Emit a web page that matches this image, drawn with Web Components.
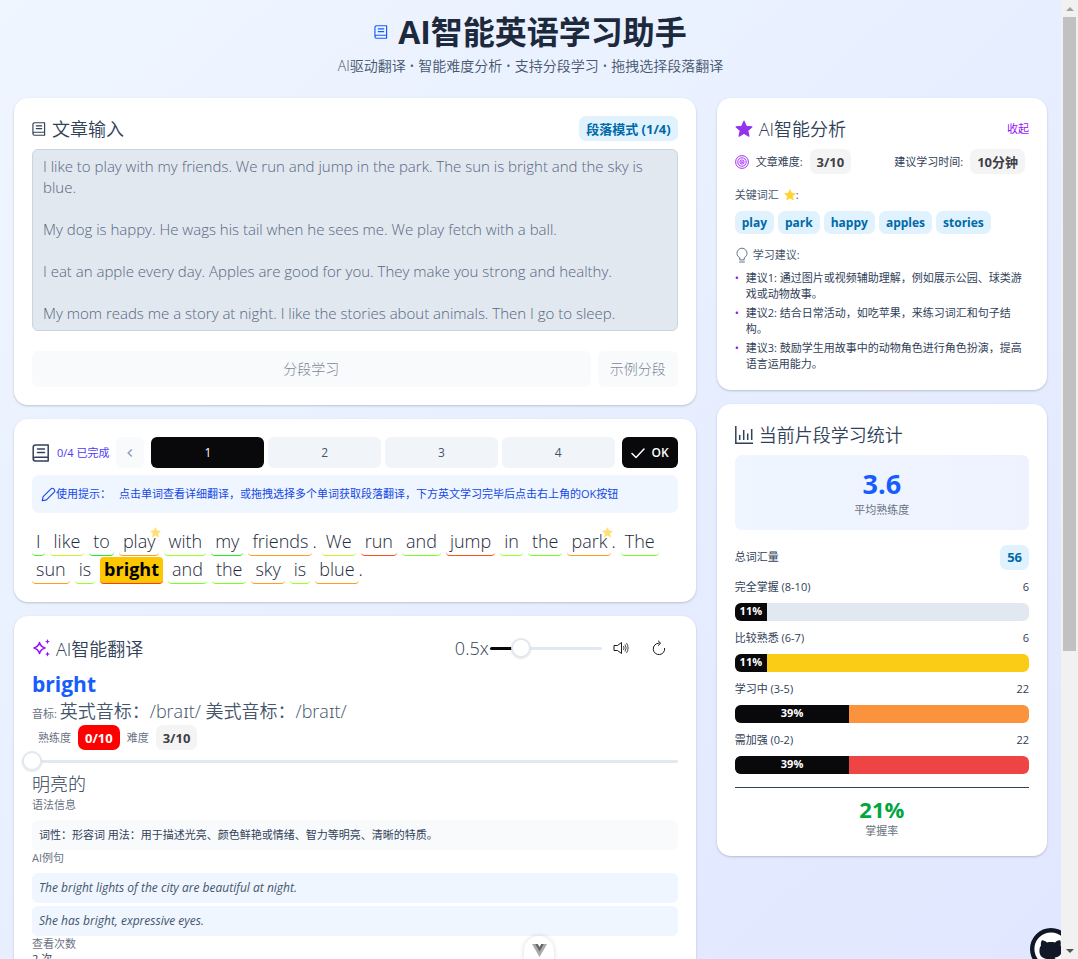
<!DOCTYPE html>
<html lang="zh-CN">
<head>
<meta charset="utf-8">
<meta name="viewport" content="width=device-width, initial-scale=1">
<title>AI智能英语学习助手</title>
<style>
html, body { margin: 0; height: 100%; }
body {
  font-family: "Open Sans", "Noto Sans CJK SC", "Noto Sans", sans-serif;
  font-size: 11px; line-height: 16px; color: #314158;
  overflow: hidden;
}
</style>
</head>
<body>
<study-app></study-app>
<script>
const BASE = `
  *, *::before, *::after { box-sizing: border-box; }
  :host { display: block; box-sizing: border-box; }
  :host([hidden]) { display: none; }
  h1, h2, p, ul { margin: 0; padding: 0; font-weight: inherit; }
  button, textarea { font: inherit; }
  button { border: 0; padding: 0; cursor: pointer; }
`;

function define(name, css, html, setup) {
  const tpl = document.createElement('template');
  customElements.define(name, class extends HTMLElement {
    constructor() {
      super();
      this.attachShadow({ mode: 'open' });
    }
    connectedCallback() {
      if (this.shadowRoot.childNodes.length) return;
      const markup = typeof html === 'function' ? html(this) : html;
      tpl.innerHTML = `<style>${BASE}${css}</style>${markup}`;
      this.shadowRoot.append(tpl.content.cloneNode(true));
      if (setup) setup(this);
    }
  });
}

/* ---------- icons ---------- */
const STAR = 'M12 1.5l3.1 6.9 7.5.8-5.6 5 1.6 7.4L12 17.8l-6.6 3.8L7 14.2l-5.6-5 7.5-.8z';
const ICONS = {
  book: ['0 0 18 18', '<g fill="none" stroke="currentColor" stroke-width="1.5" stroke-linejoin="round" stroke-linecap="round"><path d="M16.2 13.2V1H3.4A2.2 2.2 0 0 0 1.2 3.200V15a2 2 0 0 0 2 2h13M16.200 13.200H3.200a1.900 1.900 0 0 0 0 3.800M16.200 13.200v3.800M5.500 5h7M5.500 8.500h7"/></g>'],
  star: ['0 0 24 24', `<path fill="currentColor" stroke="currentColor" stroke-width="1.500" stroke-linejoin="round" d="${STAR}"/>`],
  target: ['0 0 16 16', '<g fill="none" stroke="currentColor"><circle cx="8" cy="8" r="7.300"/><circle cx="8" cy="8" r="4.800"/><circle cx="8" cy="8" r="2.400"/></g><circle cx="8" cy="8" r="1" fill="currentColor"/>'],
  bulb: ['0 0 14 16', '<path fill="none" stroke="currentColor" stroke-linecap="round" stroke-linejoin="round" d="M4.800 12.500v-1.800C3 9.800 2 8.200 2 6.200a5 5 0 0 1 10 0c0 2-1 3.600-2.800 4.500v1.800zM4.500 15h5"/>'],
  chart: ['0 0 18 18', '<path fill="none" stroke="currentColor" stroke-width="1.500" d="M.8 0v17.200H18"/><path fill="none" stroke="currentColor" stroke-width="1.500" d="M4.700 14V9M8.700 14V4M12.700 14V7.500M16.700 14V3"/>'],
  pen: ['0 0 16 16', '<path fill="none" stroke="currentColor" stroke-width="1.200" stroke-linejoin="round" d="M1.300 14.700l1-4.500 8.300-8.300a2 2 0 0 1 2.900 0l.6.6a2 2 0 0 1 0 2.900l-8.300 8.300z"/>'],
  sparkle: ['0 0 18 18', '<path fill="none" stroke="currentColor" stroke-width="1.500" stroke-linejoin="round" d="M7.500 3.500c.8 3.200 2.200 4.500 5.500 5.500-3.300 1-4.700 2.300-5.500 5.500C6.700 11.300 5.300 10 2 9c3.300-1 4.700-2.300 5.500-5.500z"/><path fill="currentColor" d="M15.500 0l.8 1.900 1.700.6-1.700.7-.8 1.800-.8-1.800-1.700-.7 1.700-.6zM15.500 12.500l.8 1.900 1.700.6-1.700.7-.8 1.800-.8-1.800-1.700-.7 1.700-.6z"/>'],
  speaker: ['0 0 16 16', '<g fill="none" stroke="currentColor"><path d="M1 5.500h3.500L8.500 2.500v11L4.500 10.500H1z"/><path d="M10.500 6q1 2 0 4M12 4.500q2.200 3.500 0 7M13.500 3q3.200 5 0 10" stroke-width=".8"/></g>'],
  refresh: ['0 0 16 16', '<g fill="none" stroke="currentColor"><path d="M8.500 3.200H7.800A5.700 5.700 0 1 0 13.600 8"/><path d="M7 .7l2.600 2.500L7 5.700"/></g>'],
  check: ['0 0 14 14', '<path fill="none" stroke="currentColor" stroke-width="1.500" stroke-linecap="round" stroke-linejoin="round" d="M1 7.500l4 4L13 3"/>'],
  left: ['0 0 14 14', '<path fill="none" stroke="currentColor" stroke-width="1.500" d="M8.800 3.500L5.200 7l3.600 3.500"/>'],
  vue: ['0 0 15 13', '<path fill="#aaa" d="M0 0h3l4.500 8L12 0h3L7.500 13z"/><path fill="#666" d="M3 0h2.800l1.700 3 1.700-3H12L7.500 8z"/>'],
  github: ['0 0 42 42', '<circle cx="21" cy="21" r="18.800" fill="#fff" stroke="#101828" stroke-width="4.400"/><path fill="#101828" d="M11.500 13c.2-.8.500-1 1.200-.8 1.800.5 3.300 1.300 4.300 2.200 2.600-.6 5.400-.6 8 0 1-1 2.500-1.800 4.300-2.200.7-.2 1 0 1.200.8.400 1.800.4 3.200 0 4.300 1.200 1.500 1.700 3.200 1.500 5.200-.4 4.300-3 6.500-7.500 7.200 1 1 1.500 2 1.500 3.500v6h-10v-3.500c-3.500.7-4.500-.6-5.300-2.400-.4-.8-.8-1.200-1.500-1.700 2.200-.4 3 1.600 4 2.200 1 .5 2 .4 2.900 0 .1-1.200.5-2 1.200-2.700-5.500-.7-8.300-3.500-7.800-9.300.1-1.800.5-3 1.500-4.300-.4-1.200-.2-2.700.5-4.500z"/>']
};
define('ui-icon', `
  :host { display: inline-flex; flex: none; width: 18px; height: 18px; }
  svg { width: 100%; height: 100%; display: block; }`,
  el => { const [box, body] = ICONS[el.getAttribute('name')];
    return `<svg viewBox="${box}" aria-hidden="true">${body}</svg>`; });

/* ---------- small building blocks ---------- */
define('ui-card', `
  :host { background: #fff; border-radius: 14px; padding: 18px;
    box-shadow: 0 1px 3px rgba(0,0,0,.1), 0 1px 2px rgba(0,0,0,.1); }`, '<slot></slot>');

define('ui-heading', `
  :host { display: flex; align-items: center; gap: 6px; height: 25px; }
  h2 { padding-top: 1px; font-size: 18px; line-height: 26px; font-weight: 350; color: #314158; }
  .end { margin-left: auto; display: flex; }`,
  '<slot name="icon"></slot><h2><slot></slot></h2><div class="end"><slot name="end"></slot></div>');

define('ui-badge', `
  :host { display: inline-flex; align-items: center; flex: none; height: 25px; padding: 0 7px; border-radius: 7px;
    font-size: 13px; line-height: 16px; font-weight: 700; background: #f4f4f5; color: #3f3f46; }
  :host([tone=info]) { background: #dff2fe; color: #0069a8; }
  :host([tone=danger]) { background: #f00; color: #fff; }
  :host([small]) { height: 23px; font-size: 12px; }`, '<slot></slot>');

define('ui-progress', `
  .row { display: flex; justify-content: space-between; line-height: 16px; }
  .track { margin-top: 8px; height: 18px; border-radius: 6px; overflow: hidden; background: var(--track); }
  .fill { height: 100%; background: #09090b; color: #fff; font-weight: 700; text-align: center; line-height: 16px; width: var(--value); }`,
  el => { const v = el.getAttribute('value');
    return `<div class="row"><span id="l">${el.getAttribute('label')}</span><span>${el.getAttribute('count')}</span></div>
      <div class="track" role="progressbar" aria-labelledby="l" aria-valuenow="${v}" style="--value:${v}%;--track:${el.getAttribute('color')}"><div class="fill">${v}%</div></div>`; });

define('ui-slider', `
  :host { display: flex; }
  input { -webkit-appearance: none; appearance: none; margin: 0; width: 100%; height: 20px; background: transparent; }
  input::-webkit-slider-runnable-track { height: 3px; border-radius: 2px;
    background: linear-gradient(to right, #09090b var(--fill, 0%), #e2e8f0 var(--fill, 0%)); }
  input::-webkit-slider-thumb { -webkit-appearance: none; width: 20px; height: 20px; margin-top: -9px;
    border-radius: 50%; background: #fff; border: 2px solid #e2e8f0; box-shadow: 0 1px 2px rgba(0,0,0,.1); }`,
  el => `<input type="range" aria-label="${el.getAttribute('label')}" min="0" max="${el.getAttribute('max')}" step="0.1" value="${el.getAttribute('value')}">`);

/* ---------- page parts ---------- */
define('page-header', `
  :host { text-align: center; margin-bottom: 22px; }
  h1 { display: flex; align-items: center; justify-content: center; gap: 10px; font-size: 32px; line-height: 36px; font-weight: 700; color: #1d293d; }
  h1 ui-icon { width: 14px; height: 14px; color: #155dfc; }
  p { margin-top: 6px; font-size: 14px; line-height: 20px; color: #45556c; font-weight: 350; }`,
  `<h1><ui-icon name="book"></ui-icon>AI智能英语学习助手</h1>
   <p>AI驱动翻译 • 智能难度分析 • 支持分段学习 • 拖拽选择段落翻译</p>`);

define('article-input', `
  ui-icon { width: 14px; height: 14px; }
  textarea { display: block; width: 100%; height: 182px; margin: 8px 0 20px; padding: 6px 10px; resize: none; overflow: hidden;
    border: 1px solid #cad5e2; border-radius: 6px; background: #e2e8f0; color: #56677f; font-size: 15px; line-height: 21px; font-weight: 350; }
  .row { display: flex; gap: 7px; }
  .row button { height: 36px; border-radius: 6px; background: #f8fafc; color: #7c8698; font-size: 14px; font-weight: 300; padding: 0 12px; }
  .row .grow { flex: 1; }`,
  `<ui-card>
    <ui-heading><ui-icon slot="icon" name="book"></ui-icon>文章输入<ui-badge slot="end" tone="info">段落模式 (1/4)</ui-badge></ui-heading>
    <textarea aria-label="文章输入" disabled>I like to play with my friends. We run and jump in the park. The sun is bright and the sky is blue.

My dog is happy. He wags his tail when he sees me. We play fetch with a ball.

I eat an apple every day. Apples are good for you. They make you strong and healthy.

My mom reads me a story at night. I like the stories about animals. Then I go to sleep.</textarea>
    <div class="row"><button class="grow" disabled>分段学习</button><button disabled>示例分段</button></div>
  </ui-card>`);

const G = '#4cf01c', L = '#c6f61c', O = '#ff9d1c', R = '#ff4d1c', Y = '#9aff1c';
const WORDS = [['I', G], ['like', L], ['to', '#1cf01c'], ['play', O, '', 1], ['with', Y], ['my', '#1cf01c'], ['friends', O, '.'],
  ['We', L], ['run', R], ['and', '#7dff1c'], ['jump', R], ['in', Y], ['the', '#7dff1c'], ['park', O, '.', 1], ['The', '#7dff1c'],
  ['sun', O], ['is', Y], ['bright', '#ff3b1c', '', 0, 1], ['and', '#7dff1c'], ['the', '#7dff1c'], ['sky', O], ['is', Y], ['blue', O, '.']];
define('study-reader', `
  .nav { display: flex; align-items: center; gap: 7px; }
  .nav > span { color: #4f39f6; white-space: nowrap; }
  .nav button { height: 31px; border-radius: 6px; font-size: 12px; }
  .prev { width: 28px; background: #f8fafc; color: #90a1b9; }
  .prev ui-icon { width: 14px; height: 14px; vertical-align: middle; }
  .steps { flex: 1; display: flex; gap: 4px; }
  .steps button { flex: 1; background: #f1f5f9; color: #45556c; }
  .steps button.on, .ok { background: #09090b; color: #fff; }
  .nav .ok { display: flex; align-items: center; gap: 7px; padding: 0 9px; font-weight: 600; }
  .ok ui-icon { width: 14px; height: 14px; }
  .hint { display: flex; align-items: center; height: 38px; margin: 7px 0 16px; padding: 0 9px; border-radius: 7px; background: #eff6ff; color: #1447e6; }
  .hint ui-icon { width: 15px; height: 15px; }
  .hint span { margin-right: 8px; }
  .words { display: flex; flex-wrap: wrap; gap: 1px 5px; font-size: 18px; line-height: 25px; font-weight: 350; color: #1d293d; }
  .words > span { display: flex; }
  .w { position: relative; height: 27px; padding: 0 4px; border-radius: 4px; border-bottom: 1px solid var(--c); }
  .w.on { background: #fdc700; color: #000; font-weight: 700; }
  .w ui-icon { position: absolute; top: -2px; right: -2px; width: 11px; height: 11px; color: #ffdf70; }`,
  `<ui-card>
    <div class="nav"><ui-icon name="book"></ui-icon><span>0/4 已完成</span>
      <button class="prev" aria-label="上一段"><ui-icon name="left"></ui-icon></button>
      <div class="steps"><button class="on">1</button><button>2</button><button>3</button><button>4</button></div>
      <button class="ok"><ui-icon name="check"></ui-icon>OK</button></div>
    <div class="hint"><ui-icon name="pen"></ui-icon><span>使用提示：</span><p>点击单词查看详细翻译，或拖拽选择多个单词获取段落翻译，下方英文学习完毕后点击右上角的OK按钮</p></div>
    <div class="words">${WORDS.map(([w, c, p = '', s, on]) => `<span><span class="w${on ? ' on' : ''}" style="--c:${c}">${w}${s ? '<ui-icon name="star"></ui-icon>' : ''}</span>${p}</span>`).join('')}</div>
  </ui-card>`);

define('word-translation', `
  ui-heading { height: 28px; }
  .purple { color: #9810fa; }
  .ctl { display: flex; align-items: center; font-size: 18px; font-weight: 350; }
  .ctl ui-slider { width: 112px; margin-left: 1px; }
  .ctl button { display: flex; justify-content: center; align-items: center; width: 38px; height: 28px; background: none; color: #18181b; }
  .ctl ui-icon { width: 16px; height: 16px; }
  .word { margin-top: 8px; font-size: 21px; line-height: 28px; font-weight: 700; color: #155dfc; }
  .label { color: #6a7282; line-height: 15px; }
  .ph { height: 27px; line-height: 27px; color: #45556c; }
  .ph b { font-size: 18px; font-weight: 350; }
  .levels { display: flex; align-items: center; gap: 7px; padding-left: 6px; }
  .master { margin: 1px 0 1px -10px; }
  .big { font-size: 18px; line-height: 25px; font-weight: 300; }
  .box { padding: 7px; line-height: 16px; border-radius: 6px; background: #f8fafc; margin-top: 8px; }
  .ex { font-size: 12px; font-style: italic; background: #eff6ff; color: #45556c; }
  .ex + .ex { margin-top: 3px; }`,
  `<ui-card>
    <ui-heading><ui-icon class="purple" slot="icon" name="sparkle"></ui-icon>AI智能翻译
      <div class="ctl" slot="end">0.5x<ui-slider label="语速" max="2.2" value="0.5" style="--fill:28%"></ui-slider>
        <button aria-label="朗读"><ui-icon name="speaker"></ui-icon></button><button aria-label="刷新"><ui-icon name="refresh"></ui-icon></button></div></ui-heading>
    <p class="word">bright</p>
    <p class="ph"><span class="label">音标:</span> <b>英式音标：/braɪt/ 美式音标：/braɪt/</b></p>
    <div class="levels"><span class="label">熟练度</span><ui-badge tone="danger">0/10</ui-badge><span class="label">难度</span><ui-badge>3/10</ui-badge></div>
    <ui-slider class="master" label="熟练度" max="10" value="0"></ui-slider>
    <p class="big">明亮的</p>
    <p class="label">语法信息</p>
    <p class="box">词性：形容词 用法：用于描述光亮、颜色鲜艳或情绪、智力等明亮、清晰的特质。</p>
    <p class="label">AI例句</p>
    <p class="box ex">The bright lights of the city are beautiful at night.</p>
    <p class="box ex">She has bright, expressive eyes.</p>
    <p class="label">查看次数</p>
    <p>2 次</p>
  </ui-card>`);

define('article-analysis', `
  .star { color: #9333ea; }
  .link { background: none; color: #9810fa; line-height: 16px; }
  .row { display: flex; align-items: center; justify-content: space-between; margin-top: 8px; padding-right: 4px; }
  .row div { display: flex; align-items: center; gap: 7px; }
  .row ui-icon { width: 14px; height: 14px; color: #9810fa; }
  .t { display: flex; align-items: center; height: 16px; margin: 13px 0 8px; color: #45556c; }
  .t ui-icon { width: 12px; height: 12px; color: #ffd230; margin-left: 5px; }
  .tags { display: flex; flex-wrap: wrap; gap: 4px; }
  .t .bulb { width: 14px; height: 16px; color: #62748e; margin: 0 4px 0 0; }
  ul { list-style: none; display: grid; gap: 3px; margin-top: -1px; }
  li { position: relative; padding: 0 5px 0 11px; }
  li::before { content: "•"; position: absolute; left: 0; color: #9810fa; }`,
  `<ui-card>
    <ui-heading><ui-icon class="star" slot="icon" name="star"></ui-icon>AI智能分析<button class="link" slot="end">收起</button></ui-heading>
    <div class="row"><div><ui-icon name="target"></ui-icon>文章难度:<ui-badge>3/10</ui-badge></div><div>建议学习时间:<ui-badge>10分钟</ui-badge></div></div>
    <p class="t">关键词汇<ui-icon name="star"></ui-icon>:</p>
    <div class="tags">${['play', 'park', 'happy', 'apples', 'stories'].map(t => `<ui-badge tone="info" small>${t}</ui-badge>`).join('')}</div>
    <p class="t"><ui-icon class="bulb" name="bulb"></ui-icon>学习建议:</p>
    <ul><li>建议1: 通过图片或视频辅助理解，例如展示公园、球类游戏或动物故事。</li>
      <li>建议2: 结合日常活动，如吃苹果，来练习词汇和句子结构。</li>
      <li>建议3: 鼓励学生用故事中的动物角色进行角色扮演，提高语言运用能力。</li></ul>
  </ui-card>`);

define('study-stats', `
  .avg { height: 75px; margin: 8px 0 14px; padding-top: 11px; border-radius: 7px; color: #6a7282; text-align: center;
    background: linear-gradient(to right, #eff6ff, #eef2ff); }
  .avg b { display: block; font-size: 27px; line-height: 36px; font-weight: 700; color: #155dfc; }
  .total { display: flex; justify-content: space-between; align-items: center; height: 26px; }
  ui-progress { margin-top: 9px; }
  .rate { margin-top: 13px; padding-top: 7px; border-top: 1px solid #314158; text-align: center; color: #6a7282; line-height: 15px; }
  .rate b { display: block; font-size: 22px; line-height: 28px; font-weight: 700; color: #00a63e; }`,
  `<ui-card>
    <ui-heading><ui-icon slot="icon" name="chart"></ui-icon>当前片段学习统计</ui-heading>
    <div class="avg"><b>3.6</b>平均熟练度</div>
    <div class="total">总词汇量<ui-badge tone="info">56</ui-badge></div>
    <ui-progress label="完全掌握 (8-10)" count="6" value="11" color="#e2e8f0"></ui-progress>
    <ui-progress label="比较熟悉 (6-7)" count="6" value="11" color="#facc15"></ui-progress>
    <ui-progress label="学习中 (3-5)" count="22" value="39" color="#fb923c"></ui-progress>
    <ui-progress label="需加强 (0-2)" count="22" value="39" color="#ef4444"></ui-progress>
    <div class="rate"><b>21%</b>掌握率</div>
  </ui-card>`);

define('window-scrollbar', `
  :host { width: 17px; flex: none; display: flex; flex-direction: column; background: #f1f1f1; }
  i { flex: none; height: 17px; display: grid; place-items: center; }
  i::before { content: ""; border: 4px solid transparent; border-top: 0; border-bottom-color: #a3a3a3; }
  i.down::before { border: 4px solid transparent; border-bottom: 0; border-top-color: #505050; }
  .rail { flex: 1; padding: 0 2px; }
  .thumb { height: 68.5%; background: #c1c1c1; }`,
  '<i></i><div class="rail"><div class="thumb"></div></div><i class="down"></i>');

define('study-app', `
  :host { display: flex; height: 100vh; }
  main { flex: 1; min-width: 0; overflow-y: auto; scrollbar-width: none; padding: 14px;
    background: linear-gradient(to bottom right, #eff6ff, #e0e7ff); }
  .grid { display: grid; grid-template-columns: repeat(3, minmax(0, 1fr)); gap: 21px; align-items: start; }
  .col { display: grid; gap: 14px; }
  .col.wide { grid-column: span 2; }
  window-scrollbar { position: relative; z-index: 3; }
  .gh { position: fixed; z-index: 2; right: 6px; bottom: -11px; width: 42px; height: 42px; }
  .gh ui-icon { width: 42px; height: 42px; }
  .vue { position: fixed; z-index: 2; bottom: -17px; left: 50%; translate: -50% 0; width: 30px; height: 40px; display: flex; justify-content: center;
    align-items: flex-start; padding-top: 8px; border: 0; border-radius: 15px; background: #fff; box-shadow: 0 0 5px rgba(0,0,0,.15); }
  .vue ui-icon { width: 15px; height: 13px; }`,
  `<main>
    <page-header></page-header>
    <div class="grid">
      <div class="col wide"><article-input></article-input><study-reader></study-reader><word-translation></word-translation></div>
      <div class="col"><article-analysis></article-analysis><study-stats></study-stats></div>
    </div>
  </main>
  <window-scrollbar></window-scrollbar>
  <a class="gh" href="#github" aria-label="GitHub"><ui-icon name="github"></ui-icon></a>
  <button class="vue" aria-label="Vue DevTools"><ui-icon name="vue"></ui-icon></button>`);
</script>
</body>
</html>
